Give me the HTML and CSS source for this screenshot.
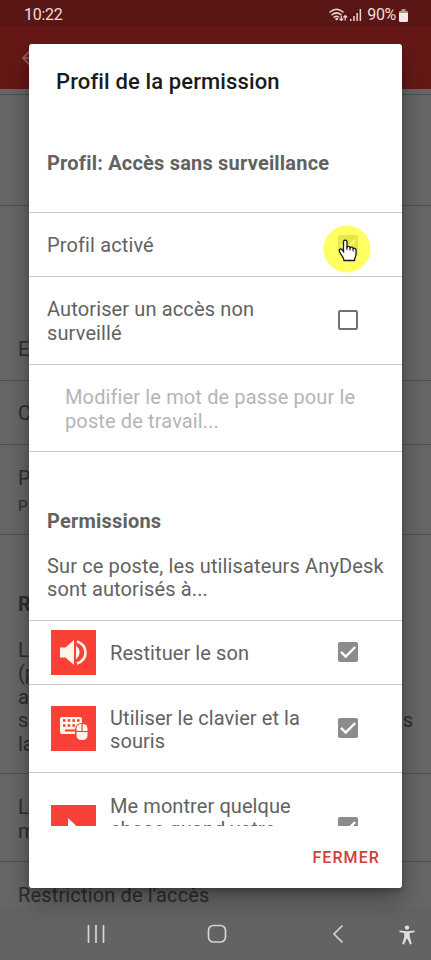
FILE: index.html
```
<!DOCTYPE html>
<html lang="fr">
<head>
<meta charset="utf-8">
<title>Profil de la permission</title>
<link rel="stylesheet" href="styles.css">
</head>
<body>
<div class="phone">
  <header class="status">
    <span class="clock">10:22</span>
    <svg class="wifi" width="19" height="14" viewBox="0 0 19 14" fill="none" stroke="#f0d5d2" stroke-width="1.5" stroke-linecap="round"><path d="M1 4Q7.500-1.500 14 4M3 6.800Q7.500 3 12 6.800M5.200 9.200Q7.500 7.500 9.500 9"/><path stroke-width="1.200" d="M12.300 8v4.500m-1.500-1.500 1.500 1.500 1.500-1.500M16.200 12V7.500m-1.500 1.500 1.500-1.500L17.700 9"/><circle cx="7.700" cy="11" r=".6"/></svg>
    <svg class="signal" width="12" height="12" viewBox="0 0 12 12" fill="#f0d5d2"><path d="M0 10h1.500v2H0zM3.200 7h1.500v5H3.200zM6.400 4h1.500v8H6.400zM9.600 0h1.500v12H9.600z"/></svg>
    <span class="percent">90%</span>
    <svg class="battery" width="9" height="13" viewBox="0 0 9 13"><path fill="#a98" d="M2.500 0h4v2H8q1 0 1 1v2H0V3q0-1 1-1h1.500z"/><path fill="#fbe8e5" d="M0 4h9v7.500q0 1.500-1.500 1.500h-6Q0 13 0 11.500z"/></svg>
  </header>
  <div class="appbar"><svg width="20" height="20" viewBox="0 0 20 20" fill="none" stroke="#8b5e5c" stroke-width="2"><path d="M9 3 2 10l7 7M2 10h18"/></svg></div>
  <main class="settings">
    <div class="item gap"></div>
    <div class="item blank"></div>
    <div class="item category">E</div>
    <div class="item single">C</div>
    <div class="item double">P<small>P</small></div>
    <div class="item rights"><b>R</b><p>L</p><p>(p</p><p>a</p><p class="ends"><span>s</span><span>s</span></p><p>la</p></div>
    <div class="item pair"><p>L</p><p>m</p></div>
    <div class="last">Restriction de l'accès</div>
  </main>
  <nav class="navbar">
    <svg class="recents" width="18" height="18" viewBox="0 0 18 18" stroke="#d5d5d5" stroke-width="1.700"><path d="M1.500 0v18M9 0v18M16.500 0v18"/></svg>
    <svg class="home" width="20" height="20" viewBox="0 0 20 20" fill="none" stroke="#d5d5d5" stroke-width="1.700"><rect x="1.500" y="1.500" width="17" height="16.500" rx="5"/></svg>
    <svg class="back" width="12" height="20" viewBox="0 0 12 20" fill="none" stroke="#d5d5d5" stroke-width="1.700"><path d="M10.500 1.500 2 10l8.500 8.500"/></svg>
    <svg class="person" width="16" height="20" viewBox="0 0 16 20" fill="#dedede"><circle cx="8" cy="2.600" r="2.200"/><path d="M.5 5.500 8 6.200l7.500-.7v1.800l-4.700.8v4l2 7-1.800.5L8.500 14h-1L5 19.600l-1.800-.5 2-7v-4L.5 7.300z"/></svg>
  </nav>
  <section class="dialog">
    <h1>Profil de la permission</h1>
    <div class="scroll">
      <h2 class="profile">Profil: Accès sans surveillance</h2>
      <div class="row short"><span class="label">Profil activé</span>
        <span class="target">
          <svg class="box" width="20" height="20" viewBox="0 0 20 20"><rect width="20" height="20" rx="2" fill="#8c8c8c"/><path d="m3 9.800 4.700 4.700L17.200 5" fill="none" stroke="#fff" stroke-width="2.400"/></svg>
          <svg class="pointer" width="48" height="48" viewBox="0 0 48 48"><circle cx="24" cy="24" r="23.500" fill="#ffff36" fill-opacity=".78"/><path d="M20.500 17c0-2.600 3.500-2.600 3.500 0v5c.8-1.200 3-.8 3.100.7.900-1.100 2.900-.6 3 .9 1-.8 2.900-.2 2.900 1.400v4.500c0 2.200-1.500 3.500-1.500 6H21c0-2.600-2-4.300-3.300-6.700-1-1.900-2.200-3.600-1-4.500 1.400-1.100 2.800.8 3.800 2.200z" fill="#fff" stroke="#191919" stroke-width="1.300"/><path d="M24 21.500V25m3.100-3V25.500m3-2v3" stroke="#191919" stroke-width="1" fill="none"/></svg>
        </span>
      </div>
      <div class="row tall"><span class="label">Autoriser un accès non<br>surveillé</span><svg class="box" width="20" height="20" viewBox="0 0 20 20"><rect x="1" y="1" width="18" height="18" rx="1.200" fill="none" stroke="#707070" stroke-width="2"/></svg></div>
      <div class="row tall disabled"><span class="label">Modifier le mot de passe pour le<br>poste de travail...</span></div>
      <h2 class="permissions">Permissions</h2>
      <p class="intro">Sur ce poste, les utilisateurs AnyDesk<br>sont autorisés à...</p>
      <div class="row short action">
        <svg class="tile" width="45" height="45" viewBox="0 0 45 45"><path fill="#fa4138" d="M0 0h45v45H0z"/><path fill="#fff5e8" d="M9 17.500h5.500l8.500-7.500v25l-8.500-7.500H9z"/><path fill="#fff5e8" d="M25 15.500q7.500 6.500 0 14z"/><path d="M26 11.500q8.500 3 8.500 11T26 33.500" fill="none" stroke="#fff5e8" stroke-width="2.600"/></svg>
        <span class="label">Restituer le son</span><svg class="box" width="20" height="20" viewBox="0 0 20 20"><rect width="20" height="20" rx="2" fill="#8c8c8c"/><path d="m3 9.800 4.700 4.700L17.200 5" fill="none" stroke="#fff" stroke-width="2.400"/></svg>
      </div>
      <div class="row tall action">
        <svg class="tile" width="45" height="45" viewBox="0 0 45 45"><path fill="#fa4138" d="M0 0h45v45H0z"/><rect x="9" y="11" width="22" height="17" rx="2" fill="#fff5e8"/><path d="M12 14.500h17M12 19.500h17" stroke="#e54338" stroke-width="2.500" stroke-dasharray="2.500 2.200"/><path d="M14 24.500h10" stroke="#e54338" stroke-width="2"/><rect x="24" y="17" width="14" height="19" rx="6.500" fill="#fa4138"/><rect x="25.500" y="18" width="11" height="16" rx="4.500" fill="#fff5e8"/><path d="M25 25.500h12M31 18v7.500" stroke="#e54338" stroke-width="1.200"/></svg>
        <span class="label">Utiliser le clavier et la<br>souris</span><svg class="box" width="20" height="20" viewBox="0 0 20 20"><rect width="20" height="20" rx="2" fill="#8c8c8c"/><path d="m3 9.800 4.700 4.700L17.200 5" fill="none" stroke="#fff" stroke-width="2.400"/></svg>
      </div>
      <div class="row cut action">
        <svg class="tile" width="45" height="45" viewBox="0 0 45 45"><path fill="#fa4138" d="M0 0h45v45H0z"/><path fill="#fff" d="m17 13 17 16H24l-7 5z"/></svg>
        <span class="label">Me montrer quelque<br>chose quand votre</span><svg class="box" width="20" height="20" viewBox="0 0 20 20"><rect width="20" height="20" rx="2" fill="#8c8c8c"/><path d="m3 9.800 4.700 4.700L17.200 5" fill="none" stroke="#fff" stroke-width="2.400"/></svg>
      </div>
    </div>
    <footer><button>FERMER</button></footer>
  </section>
</div>
</body>
</html>
```
FILE: styles.css
```
* { box-sizing: border-box; }
body { margin: 0; font-family: Roboto, sans-serif; font-size: 20px; line-height: 23.6px; color: #626262; }
p, h1, h2 { margin: 0; }
svg { display: block; flex: none; }
.phone { position: relative; width: 431px; height: 960px; overflow: hidden; background: #666; display: flex; flex-direction: column; }
.status { height: 27px; flex: none; background: #591614; color: #f3dcd9; display: flex; align-items: center; padding: 3px 23px 0 24px; font-size: 16px; }
.clock { margin-right: auto; letter-spacing: -.3px; }
.wifi { margin-right: 2px; }
.signal { margin-right: 5px; }
.percent { margin-right: 3px; letter-spacing: -.3px; }
.appbar { height: 62px; flex: none; background: #651816; padding: 21px 0 0 21px; }
.settings { height: 818px; flex: none; color: #2d2d2d; }
.item { border-bottom: 1px solid #4e4e4e; padding-left: 18px; }
.gap { height: 6px; }
.blank { height: 111px; }
.category { height: 175px; padding-top: 132px; }
.single { height: 64px; padding-top: 21px; }
.double { height: 90px; padding-top: 22px; }
.double small { display: block; font-size: 15px; margin-top: 4px; }
.rights { height: 239px; padding-top: 58px; }
.rights b { display: block; font-weight: 700; margin-bottom: 22px; }
.ends { display: flex; justify-content: space-between; padding-right: 18px; }
.pair { height: 88px; padding-top: 22px; }
.last { padding: 22px 0 0 18px; letter-spacing: .15px; }
.navbar { height: 53px; flex: none; background: #636363; display: flex; align-items: center; padding: 1px 16px 0 87px; z-index: 0; }
.home { margin-left: 102px; }
.back { margin-left: 105px; }
.person { margin-left: auto; margin-top: 2px; }
.dialog { position: absolute; left: 29px; top: 44px; width: 373px; height: 844px; background: #fff; border-radius: 3px; box-shadow: 0 12px 24px rgba(0,0,0,.32), 0 3px 5px rgba(0,0,0,.2); display: flex; flex-direction: column; }
h1 { padding: 25px 27px 0; height: 68px; font-size: 22px; font-weight: 500; line-height: 25px; color: #1b1b1b; letter-spacing: .13px; }
.scroll { height: 714px; overflow: hidden; }
h2 { font-size: 20px; font-weight: 700; padding-left: 18px; letter-spacing: .2px; }
.profile { height: 101px; padding-top: 40px; border-bottom: 1px solid #c8c8c8; }
.row { display: flex; align-items: center; padding: 0 44px 0 18px; border-bottom: 1px solid #c8c8c8; }
.label { margin-right: auto; white-space: nowrap; padding-top: 2px; letter-spacing: .13px; }
.short { height: 64px; }
.tall { height: 88px; }
.tall .box, .action .box { margin-top: -1px; }
.target { position: relative; }
.pointer { position: absolute; left: -15px; top: -10px; }
.disabled { height: 87px; padding-left: 36px; color: #b5b5b5; }
.disabled .label { padding-top: 3px; }
.permissions { padding-top: 58px; }
.intro { height: 87px; padding: 21px 0 0 18px; border-bottom: 1px solid #c8c8c8; letter-spacing: .13px; }
.action { padding-left: 22px; }
.action .label { padding-top: 4px; letter-spacing: .08px; }
.tile { margin-right: 14px; }
.cut { height: 111px; align-items: flex-start; padding-top: 20px; }
.cut .label { padding-top: 2px; }
.cut .tile { margin-top: 12px; }
.cut .box { margin-top: 24px; }
footer { display: flex; justify-content: flex-end; padding: 20px 22px 0; }
button { border: 0; padding: 0; background: none; color: #d23c3b; font: 500 16px/24px Roboto, sans-serif; letter-spacing: 1.1px; }
```
